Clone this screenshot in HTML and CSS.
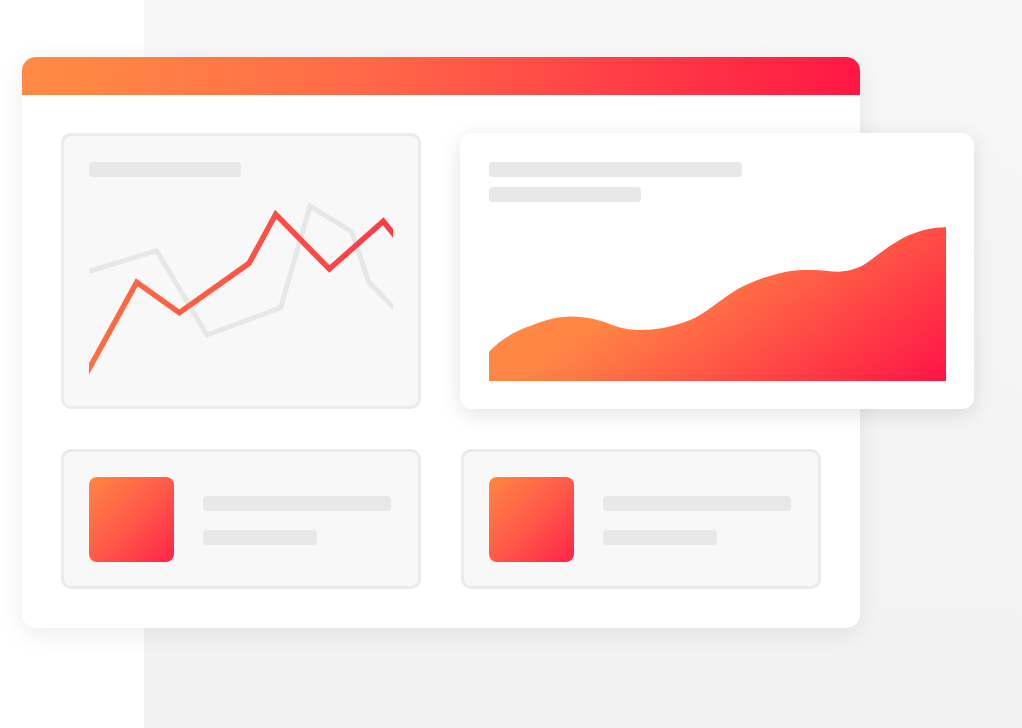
FILE: index.html
```html
<!DOCTYPE html>
<html lang="en">
<head>
<meta charset="utf-8">
<title>Dashboard illustration</title>
<link rel="stylesheet" href="styles.css">
</head>
<body>
<div class="window">
  <div class="window-bar"></div>
  <div class="window-body">
    <div class="panel chart-panel">
      <div class="ph ph-152"></div>
      <svg class="line-chart" width="304" height="190" viewBox="89 190 304 190">
        <defs>
          <linearGradient id="lineGrad" gradientUnits="userSpaceOnUse" x1="89" y1="0" x2="393" y2="0">
            <stop offset="0" stop-color="#ff6e42"/>
            <stop offset="1" stop-color="#ff3a49"/>
          </linearGradient>
        </defs>
        <polyline points="80,274 156.7,250.7 207,335 280.7,307.7 310,206 351.7,231.7 369,282.3 400,314" fill="none" stroke="#e7e7e7" stroke-width="5" stroke-linejoin="miter"/>
        <polyline points="84,378 136.7,282.3 179.3,312.7 249,263.3 275.7,214.3 329.3,269 383.3,221.3 400,242" fill="none" stroke="url(#lineGrad)" stroke-width="5.5" stroke-linejoin="miter"/>
      </svg>
    </div>
    <div class="float-card">
      <div class="ph ph-253"></div>
      <div class="ph ph-152 ph-gap"></div>
      <svg class="area-chart" width="457" height="161" viewBox="489 220 457 161">
        <defs>
          <linearGradient id="areaGrad" gradientUnits="userSpaceOnUse" x1="560" y1="250" x2="752" y2="519">
            <stop offset="0" stop-color="#ff8a45"/>
            <stop offset="0.25" stop-color="#ff8545"/>
            <stop offset="1" stop-color="#ff1446"/>
          </linearGradient>
        </defs>
        <path d="M489 351.7 C500 340 515 331 530 326 C545 320 556 317 567 316.7 C585 316 600 320 615 326 C625 329 632 330 640 330 C655 330 673 327 690 320 C705 314 720 300 736 290 C752 281 765 277 777 274 C790 270 800 270 812 270 C822 270 830 271.7 839 271.7 C850 271 860 268 868 262 C880 253 890 245 903 238 C915 232 930 227.3 946 227.3 L946 381 L489 381 Z" fill="url(#areaGrad)"/>
      </svg>
    </div>
    <div class="panel stat-panel">
      <div class="stat-icon"></div>
      <div class="stat-lines">
        <div class="ph ph-188"></div>
        <div class="ph ph-114"></div>
      </div>
    </div>
    <div class="panel stat-panel">
      <div class="stat-icon"></div>
      <div class="stat-lines">
        <div class="ph ph-188"></div>
        <div class="ph ph-114"></div>
      </div>
    </div>
  </div>
</div>
</body>
</html>
```

FILE: styles.css
```css
html, body {
  margin: 0;
  padding: 0;
}

body {
  width: 1022px;
  height: 728px;
  overflow: hidden;
  background:
    linear-gradient(#ffffff, #ffffff) left top / 144px 100% no-repeat,
    linear-gradient(180deg, #f7f7f7 0%, #f2f2f2 100%);
  font-family: "Liberation Sans", Arial, sans-serif;
  padding-top: 57px;
  box-sizing: border-box;
}

.window {
  margin-left: 22px;
  width: 838px;
  height: 571px;
  background: #ffffff;
  border-radius: 14px;
  box-shadow: 0 6px 26px rgba(0, 0, 0, 0.075);
}

.window-bar {
  height: 38px;
  border-radius: 14px 14px 0 0;
  background: linear-gradient(95deg, #ff8a45 0%, #ff8545 10%, #ff6a48 40%, #ff1744 100%);
}

.window-body {
  display: grid;
  grid-template-columns: 360px 360px;
  grid-template-rows: 276px 140px;
  column-gap: 40px;
  row-gap: 40px;
  padding: 38px 39px 39px 39px;
}

.panel {
  box-sizing: border-box;
  background: #f8f8f8;
  border: 3px solid #ebebeb;
  border-radius: 10px;
}

.ph {
  height: 15px;
  border-radius: 4px;
  background: #e8e8e8;
}

.ph-152 { width: 152px; }
.ph-253 { width: 253px; }
.ph-188 { width: 188px; }
.ph-114 { width: 114px; }
.ph-gap { margin-top: 10px; }

.chart-panel {
  padding: 26px 25px 0 25px;
}

.line-chart {
  display: block;
  margin-top: 13px;
}

.float-card {
  box-sizing: border-box;
  width: 514px;
  height: 276px;
  margin-left: -1px;
  background: #ffffff;
  border-radius: 12px;
  box-shadow: 0 5px 22px rgba(0, 0, 0, 0.11);
  padding: 29px 28px 0 29px;
}

.area-chart {
  display: block;
  margin-top: 18px;
}

.stat-panel {
  display: flex;
  align-items: center;
  padding-left: 25px;
  gap: 29px;
}

.stat-icon {
  width: 85px;
  height: 85px;
  border-radius: 8px;
  background: linear-gradient(135deg, #ff8745 0%, #ff5a48 50%, #ff2548 100%);
}

.stat-lines {
  display: flex;
  flex-direction: column;
  gap: 19px;
  margin-top: 3px;
}
```
